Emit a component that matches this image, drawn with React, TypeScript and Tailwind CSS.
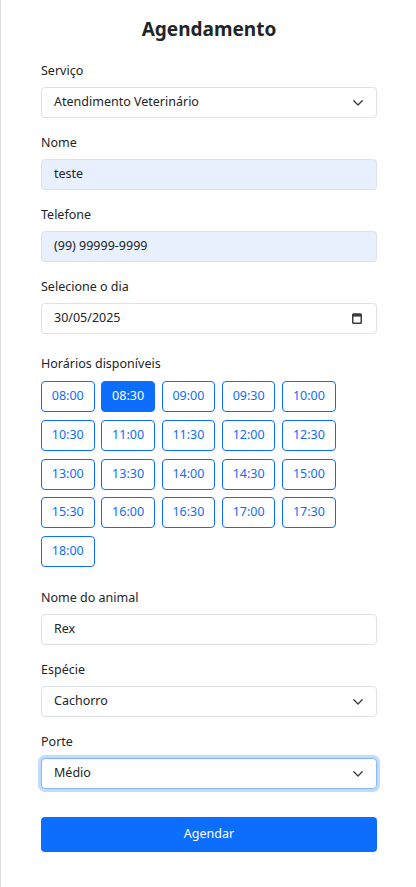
import React from "react";

const font = { fontFamily: '"Noto Sans", "Open Sans", Arial, sans-serif' };

function Chevron() {
  return (
    <svg className="w-[10px] h-[6px] mr-[1px]" viewBox="0 0 10 6" fill="none">
      <path d="M0.8 0.8l4.2 4.2 4.2-4.2" stroke="#343a40" strokeWidth={1.3} strokeLinecap="round" strokeLinejoin="round" />
    </svg>
  );
}

function CalendarIcon() {
  return (
    <svg className="w-[10px] h-[11px] mr-[2px]" viewBox="0 0 10 11" fill="none">
      <rect x="0.75" y="1" width="8.5" height="9.25" rx="0.8" stroke="#3c3c3c" strokeWidth="1.5" />
      <rect x="0.75" y="1" width="8.5" height="2.6" fill="#3c3c3c" />
    </svg>
  );
}

interface FieldProps {
  label: string;
  className?: string;
  children: React.ReactNode;
}

function Field({ label, className = "mb-[15px]", children }: FieldProps) {
  return (
    <div className={className}>
      <div className="text-[12.5px] leading-[20px] text-[#212529] mb-[6px]">{label}</div>
      {children}
    </div>
  );
}

function Box({
  value,
  autofill,
  focus,
  right,
}: {
  value: string;
  autofill?: boolean;
  focus?: boolean;
  right?: React.ReactNode;
}) {
  const bg = autofill ? "bg-[#e8f0fe]" : "bg-white";
  const border = focus
    ? "border-[#86b7fe] shadow-[0_0_0_3px_rgba(13,110,253,0.25)]"
    : "border-[#dee2e6]";
  return (
    <div className={`h-[31px] rounded-[4px] border ${bg} ${border} flex items-center justify-between px-3 text-[12.5px] text-[#212529]`}>
      <span>{value}</span>
      {right}
    </div>
  );
}

const times = [
  "08:00", "08:30", "09:00", "09:30", "10:00",
  "10:30", "11:00", "11:30", "12:00", "12:30",
  "13:00", "13:30", "14:00", "14:30", "15:00",
  "15:30", "16:00", "16:30", "17:00", "17:30",
  "18:00",
];

export default function App() {
  const selected = "08:30";

  return (
    <div className="min-h-screen bg-white border-l border-[#dddddd] pl-[40px] pr-[39px] pt-[17px] pb-[36px]" style={font}>
      <h1 className="text-[19px] leading-[24px] font-bold text-[#212529] text-center mb-[20px]">
        Agendamento
      </h1>

      <Field label="Serviço">
        <Box value="Atendimento Veterinário" right={<Chevron />} />
      </Field>

      <Field label="Nome">
        <Box value="teste" autofill />
      </Field>

      <Field label="Telefone">
        <Box value="(99) 99999-9999" autofill />
      </Field>

      <Field label="Selecione o dia" className="mb-[20px]">
        <Box value="30/05/2025" right={<CalendarIcon />} />
      </Field>

      <div className="mb-[21px]">
        <div className="text-[12.5px] leading-[20px] text-[#212529] mb-[7px]">Horários disponíveis</div>
        <div className="flex flex-wrap gap-x-[6.7px] gap-y-[7.75px]">
          {times.map((t) => (
            <button
              key={t}
              className={`w-[53.6px] h-[31px] rounded-[4px] border border-[#0d6efd] text-[12.5px] ${
                t === selected ? "bg-[#0d6efd] text-white" : "bg-white text-[#0d6efd]"
              }`}
            >
              {t}
            </button>
          ))}
        </div>
      </div>

      <Field label="Nome do animal">
        <Box value="Rex" />
      </Field>

      <Field label="Espécie">
        <Box value="Cachorro" right={<Chevron />} />
      </Field>

      <Field label="Porte" className="mb-[28px]">
        <Box value="Médio" focus right={<Chevron />} />
      </Field>

      <button className="w-full h-[35px] rounded-[4px] bg-[#0d6efd] text-white text-[12.5px]">
        Agendar
      </button>
    </div>
  );
}
